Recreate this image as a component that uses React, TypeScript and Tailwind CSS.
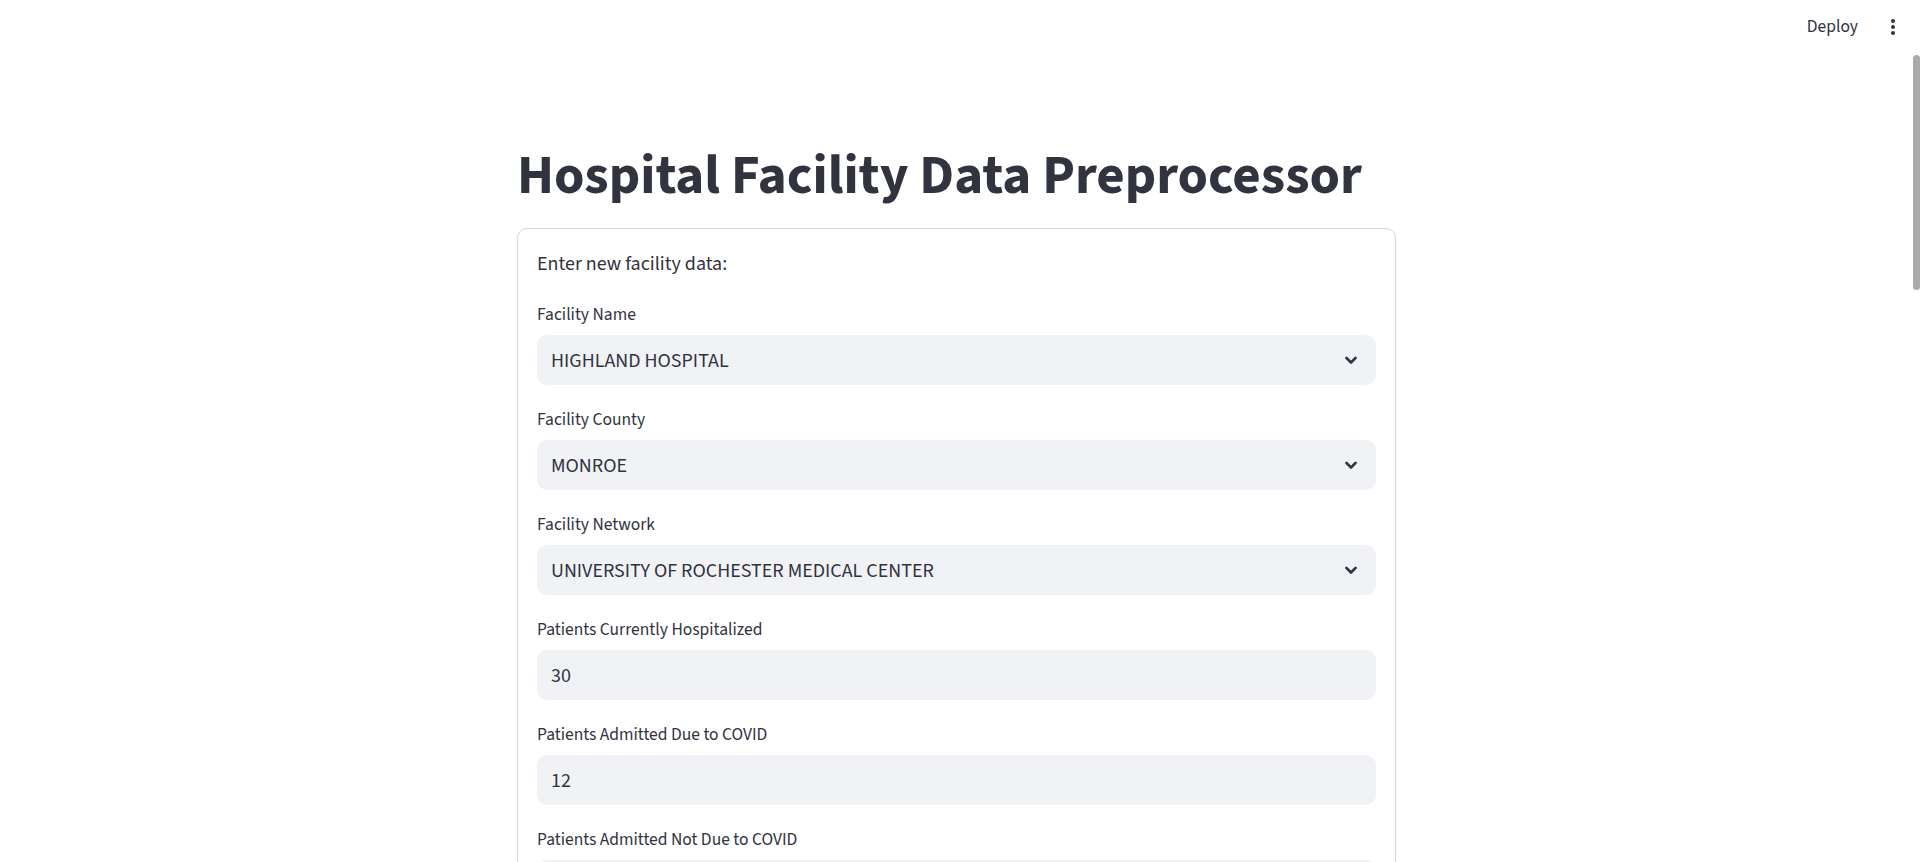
import * as React from "react";

const fields = [
  { label: "Facility Name", value: "HIGHLAND HOSPITAL", select: true },
  { label: "Facility County", value: "MONROE", select: true },
  { label: "Facility Network", value: "UNIVERSITY OF ROCHESTER MEDICAL CENTER", select: true },
  { label: "Patients Currently Hospitalized", value: "30", select: false },
  { label: "Patients Admitted Due to COVID", value: "12", select: false },
  { label: "Patients Admitted Not Due to COVID", value: "", select: false },
];

function Chevron() {
  return (
    <svg width="20" height="20" viewBox="0 0 24 24" fill="none" className="shrink-0">
      <path d="M6.5 9.5 12 15l5.5-5.5" stroke="#31333F" strokeWidth="3.2" strokeLinecap="round" strokeLinejoin="round" />
    </svg>
  );
}

export default function App() {
  return (
    <div
      className="relative h-[862px] overflow-hidden bg-white text-[#31333F]"
      style={{ fontFamily: '"Source Sans 3", "Source Sans Pro", Lato, "Noto Sans", sans-serif' }}
    >
      {/* top toolbar */}
      <header className="flex h-[54px] items-center justify-end pr-[25px]">
        <button className="mr-[33px] text-[17.5px] leading-none text-[#31333F]">Deploy</button>
        <div className="flex flex-col items-center gap-[2px]">
          <span className="block h-[4px] w-[4px] rounded-full bg-[#31333F]" />
          <span className="block h-[4px] w-[4px] rounded-full bg-[#31333F]" />
          <span className="block h-[4px] w-[4px] rounded-full bg-[#31333F]" />
        </div>
      </header>

      {/* fake scrollbar thumb */}
      <div className="absolute right-0 top-[55px] h-[235px] w-[7px] rounded-full bg-[#ababab]" />

      <div className="pr-[7px]">
        <main className="mx-auto w-[879px] pt-[89px]">
          <h1 className="mb-[19px] h-[66px] text-[55px] font-bold leading-[66px] text-[#31333F]">
            Hospital Facility Data Preprocessor
          </h1>

          <div className="rounded-[10px] border border-[#d6d6d9] px-[19px] pt-[19px] pb-[40px]">
            <p className="mb-[20px] h-[32px] text-[20px] leading-[32px]">Enter new facility data:</p>

            <div className="flex flex-col gap-[20px]">
              {fields.map((f) => (
                <div key={f.label}>
                  <label className="flex h-[30px] items-center pt-[1px] text-[17.5px]">{f.label}</label>
                  <div className="mt-[5px] flex h-[50px] items-center justify-between rounded-[10px] bg-[#F0F2F6] pl-[14px] pr-[15px]">
                    <span className="pt-[1px] text-[20px]">{f.value}</span>
                    {f.select && <Chevron />}
                  </div>
                </div>
              ))}
            </div>
          </div>
        </main>
      </div>
    </div>
  );
}
